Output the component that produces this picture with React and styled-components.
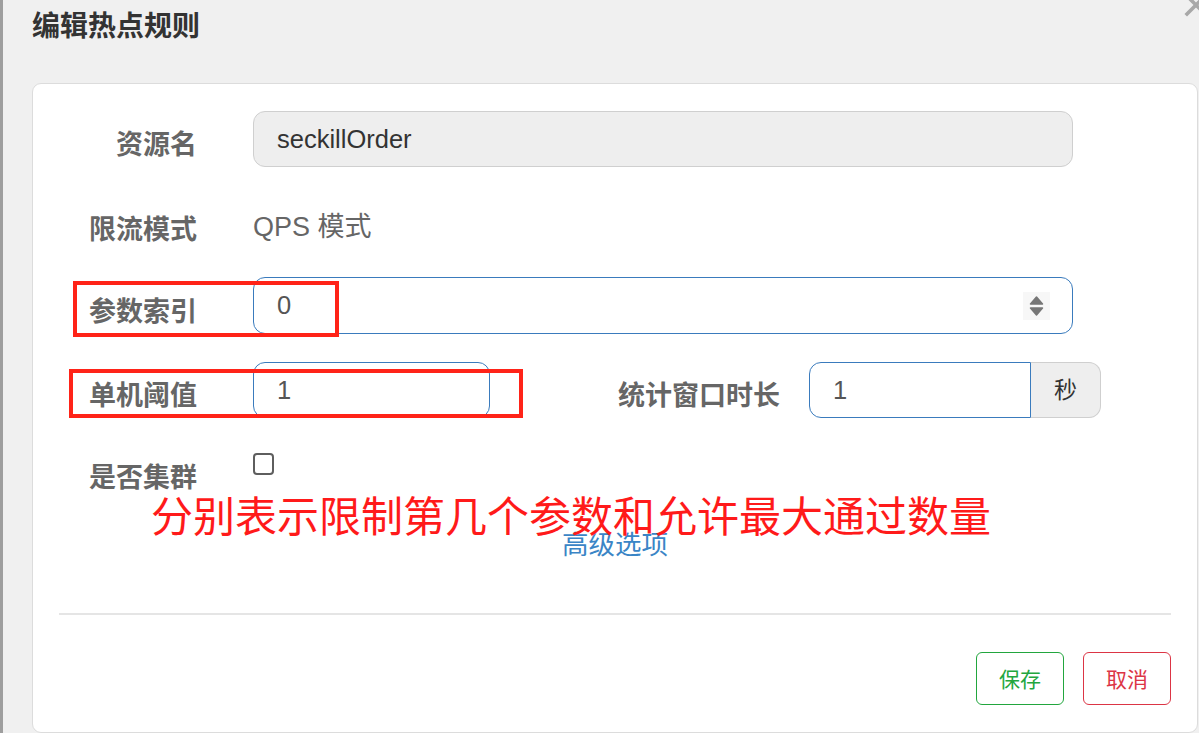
import React from "react";
import styled, { createGlobalStyle } from "styled-components";

const Global = createGlobalStyle`
  html, body { margin: 0; padding: 0; }
  body {
    background: #f0f0f0;
    overflow: hidden;
    font-family: "Liberation Sans", "Noto Sans CJK SC", sans-serif;
  }
`;

const Page = styled.div`
  display: flex;
  width: 1199px;
  height: 733px;
  overflow: hidden;
`;

const Strip = styled.div`
  width: 3px;
  flex: none;
  background: #9e9e9e;
`;

const Modal = styled.div`
  flex: 1;
  display: flex;
  flex-direction: column;
  min-width: 0;
`;

const Header = styled.div`
  height: 83px;
  display: flex;
  justify-content: space-between;
  align-items: flex-start;
  padding-left: 29px;
  box-sizing: border-box;
`;

const Title = styled.h4`
  margin: 4px 0 0;
  font-family: "Noto Sans CJK SC", sans-serif;
  font-size: 28px;
  line-height: 40px;
  font-weight: 700;
  color: #333;
`;

const Close = styled.svg`
  width: 24px;
  height: 24px;
  margin-top: -7px;
  margin-right: -9px;
  flex: none;
`;

const Card = styled.div`
  position: relative;
  margin: 0 1px 0 29px;
  height: 650px;
  box-sizing: border-box;
  background: #fff;
  border: 1px solid #dcdcdc;
  border-radius: 9px;
  padding-top: 27px;
  display: flex;
  flex-direction: column;
`;

const Row = styled.div`
  display: flex;
  align-items: ${(p) => (p.$top ? "flex-start" : "center")};
  height: ${(p) => p.$h || 56}px;
  margin-top: ${(p) => p.$mt || 0}px;
`;

const Label = styled.div`
  width: ${(p) => p.$w || 164}px;
  flex: none;
  text-align: right;
  font-family: "Noto Sans CJK SC", sans-serif;
  font-size: 27px;
  line-height: ${(p) => p.$lh || 38}px;
  font-weight: 700;
  color: #666;
  padding-top: ${(p) => p.$pt ?? 8}px;
  margin-right: ${(p) => p.$gap || 56}px;
`;

const Field = styled.div`
  width: ${(p) => p.$w}px;
  height: ${(p) => p.$h || 56}px;
  box-sizing: border-box;
  display: flex;
  align-items: center;
  justify-content: space-between;
  padding: 0 22px 0 23px;
  border: 1px solid ${(p) => (p.$disabled ? "#cfcfcf" : "#3a7bbd")};
  background: ${(p) => (p.$disabled ? "#eeeeee" : "#fff")};
  border-radius: ${(p) => (p.$joined ? "12px 0 0 12px" : "12px")};
  font-size: 25.5px;
  color: ${(p) => (p.$disabled ? "#333" : "#555")};
  flex: none;
`;

const StaticText = styled.div`
  font-family: "Liberation Sans", "Noto Sans CJK SC", sans-serif;
  font-size: 27px;
  color: #666;
`;

const Spinner = styled.svg`
  width: 27px;
  height: 28px;
  margin-top: 1px;
`;

const Group = styled.div`
  display: flex;
  flex: none;
`;

const Addon = styled.div`
  width: 70px;
  height: 56px;
  box-sizing: border-box;
  display: flex;
  align-items: center;
  justify-content: center;
  background: #eeeeee;
  border: 1px solid #cfcfcf;
  border-left: none;
  border-radius: 0 12px 12px 0;
  font-family: "Noto Sans CJK SC", sans-serif;
  font-size: 23px;
  color: #333;
  padding-bottom: 4px;
`;

const Check = styled.div`
  width: 21px;
  height: 22px;
  box-sizing: border-box;
  border: 2px solid #5e5e5e;
  border-radius: 4px;
  background: #fff;
  flex: none;
`;

const Advanced = styled.a`
  align-self: center;
  margin-top: 34px;
  font-family: "Noto Sans CJK SC", sans-serif;
  font-size: 26.5px;
  line-height: 32px;
  color: #3a85c6;
  text-decoration: none;
  cursor: pointer;
`;

const Divider = styled.hr`
  margin: 54px 26px 0;
  border: none;
  height: 2px;
  background: #e5e5e5;
`;

const Footer = styled.div`
  display: flex;
  justify-content: flex-end;
  gap: 19px;
  margin: 37px 26px 0;
`;

const Button = styled.button`
  width: 88px;
  height: 53px;
  box-sizing: border-box;
  background: #fff;
  border: 1px solid ${(p) => p.$color};
  color: ${(p) => p.$color};
  border-radius: 6px;
  font-family: "Noto Sans CJK SC", sans-serif;
  font-size: 21px;
  padding: 0 0 2px;
  cursor: pointer;
`;

const Mark = styled.div`
  position: absolute;
  left: ${(p) => p.$x}px;
  top: ${(p) => p.$y}px;
  width: ${(p) => p.$w}px;
  height: ${(p) => p.$h}px;
  box-sizing: border-box;
  border: 4px solid #ff2318;
  pointer-events: none;
`;

const Note = styled.div`
  position: absolute;
  left: 118px;
  top: 409px;
  font-family: "Noto Sans CJK SC", sans-serif;
  font-size: 42px;
  line-height: 42px;
  color: #ff1a1a;
  white-space: nowrap;
  pointer-events: none;
`;

export default function App() {
  return (
    <>
      <Global />
      <Page>
        <Strip />
        <Modal>
          <Header>
            <Title>编辑热点规则</Title>
            <Close viewBox="0 0 24 24">
              <path d="M3 3 L21 21 M21 3 L3 21" stroke="#a8a8a8" strokeWidth="3.6" strokeLinecap="square" />
            </Close>
          </Header>
          <Card>
            <Row>
              <Label>资源名</Label>
              <Field $w={820} $disabled>
                <span>seckillOrder</span>
              </Field>
            </Row>
            <Row $mt={29}>
              <Label>限流模式</Label>
              <StaticText>QPS 模式</StaticText>
            </Row>
            <Row $mt={25} $h={57}>
              <Label>参数索引</Label>
              <Field $w={820} $h={57}>
                <span>0</span>
                <Spinner viewBox="0 0 27 28">
                  <rect x="0" y="0" width="27" height="28" fill="#f7f7f7" />
                  <path d="M13.5 5 L19.5 12 L7.5 12 Z" fill="#777" stroke="#777" strokeWidth="1.5" strokeLinejoin="round" />
                  <path d="M13.5 23 L19.5 16 L7.5 16 Z" fill="#777" stroke="#777" strokeWidth="1.5" strokeLinejoin="round" />
                </Spinner>
              </Field>
            </Row>
            <Row $mt={28}>
              <Label>单机阈值</Label>
              <Field $w={237}>
                <span>1</span>
              </Field>
              <Label $w={290} $gap={29}>统计窗口时长</Label>
              <Group>
                <Field $w={222} $joined>
                  <span>1</span>
                </Field>
                <Addon>秒</Addon>
              </Group>
            </Row>
            <Row $mt={35} $h={40} $top>
              <Label $pt={8} $lh={30}>是否集群</Label>
              <Check />
            </Row>
            <Advanced>高级选项</Advanced>
            <Divider />
            <Footer>
              <Button $color="#22a63e">保存</Button>
              <Button $color="#dc3545">取消</Button>
            </Footer>
            <Mark $x={40} $y={197} $w={266} $h={56} />
            <Mark $x={36} $y={285} $w={454} $h={49} />
            <Note>分别表示限制第几个参数和允许最大通过数量</Note>
          </Card>
        </Modal>
      </Page>
    </>
  );
}
